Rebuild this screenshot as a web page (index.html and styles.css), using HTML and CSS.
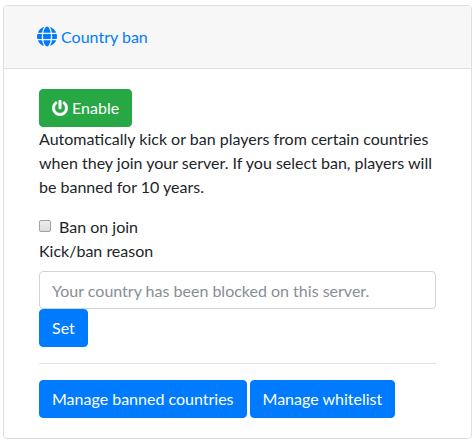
FILE: index.html
```html
<!DOCTYPE html>
<html lang="en">
<head>
<meta charset="utf-8">
<meta name="viewport" content="width=device-width, initial-scale=1">
<title>Country ban</title>
<link rel="stylesheet" href="styles.css">
</head>
<body>
<section class="card">
  <header class="card-header">
    <button type="button" class="btn btn-link"><svg class="icon icon-globe" viewBox="0 0 496 512" aria-hidden="true"><path d="M336.500 160C322 70.700 287.800 8 248 8s-74 62.700-88.500 152h177zM152 256c0 22.200 1.200 43.500 3.300 64h185.300c2.100-20.500 3.300-41.800 3.300-64s-1.200-43.500-3.300-64H155.300c-2.100 20.500-3.300 41.800-3.300 64zm324.700-96c-28.600-67.900-86.500-120.400-158-141.600 24.400 33.800 41.200 84.700 50 141.600h108zM177.200 18.400C105.800 39.600 47.800 92.100 19.300 160h108c8.700-56.900 25.500-107.800 49.900-141.600zM487.400 192H372.700c2.100 21 3.300 42.500 3.300 64s-1.200 43-3.300 64h114.600c5.500-20.500 8.600-41.800 8.600-64s-3.100-43.500-8.500-64zM120 256c0-21.500 1.200-43 3.300-64H8.600C3.200 212.500 0 233.800 0 256s3.200 43.500 8.600 64h114.600c-2-21-3.200-42.500-3.200-64zm39.500 96c14.500 89.300 48.700 152 88.500 152s74-62.700 88.500-152h-177zm159.300 141.600c71.400-21.200 129.400-73.700 158-141.600h-108c-8.800 56.900-25.600 107.800-50 141.600zM19.300 352c28.600 67.900 86.500 120.400 158 141.600-24.400-33.800-41.200-84.700-50-141.600h-108z"/></svg> Country ban</button>
  </header>
  <div class="card-body">
    <button type="button" class="btn btn-success"><svg class="icon icon-power" viewBox="0 0 512 512" aria-hidden="true"><path d="M400 54.100c63 45 104 118.600 104 201.900 0 136.800-110.800 247.700-247.500 248C120 504.300 8.200 393 8 256.400 7.900 173.100 48.900 99.300 111.800 54.200c11.700-8.300 28-4.800 35 7.700L162.600 90c5.900 10.500 3.100 23.800-6.600 31-41.500 30.800-68 79.600-68 134.900-.1 92.300 74.500 168.100 168 168.100 91.600 0 168.600-74.200 168-169.100-.3-51.800-24.700-101.800-68.100-134-9.700-7.200-12.400-20.500-6.500-30.900l15.800-28.100c7-12.400 23.200-16.100 34.800-7.800zM296 264V24c0-13.300-10.700-24-24-24h-32c-13.300 0-24 10.700-24 24v240c0 13.300 10.700 24 24 24h32c13.300 0 24-10.700 24-24z"/></svg> Enable</button>
    <p class="description">Automatically kick or ban players from certain countries when they join your server. If you select ban, players will be banned for 10 years.</p>
    <form>
      <div class="check-row">
        <input type="checkbox" class="check" id="ban-on-join">
        <label for="ban-on-join">Ban on join</label>
      </div>
      <label class="field-label" for="reason">Kick/ban reason</label>
      <input type="text" class="text-field" id="reason" placeholder="Your country has been blocked on this server.">
      <button type="button" class="btn btn-primary">Set</button>
    </form>
    <hr class="divider">
    <div class="actions">
      <button type="button" class="btn btn-primary">Manage banned countries</button>
      <button type="button" class="btn btn-primary">Manage whitelist</button>
    </div>
  </div>
</section>
</body>
</html>
```

FILE: styles.css
```css
*,
*::before,
*::after {
  box-sizing: border-box;
}

body {
  margin: 0;
  padding: 5px 2px 4px 3px;
  background: #fff;
  color: #212529;
  font-family: Lato, "Liberation Sans", sans-serif;
  font-size: 16px;
  line-height: 24px;
}

.card {
  border: 1px solid #dfdfdf;
  border-radius: 4px;
  background: #fff;
  overflow: hidden;
}

.card-header {
  display: flex;
  padding: 12px 20px;
  border-bottom: 1px solid #dfdfdf;
  background: #f7f7f7;
}

.card-body {
  padding: 20px 35px;
}

.btn {
  display: block;
  padding: 6px 12px;
  border: 1px solid transparent;
  border-radius: 4px;
  font: inherit;
  white-space: nowrap;
  cursor: pointer;
}

.btn-link {
  background: transparent;
  color: #007bff;
}

.btn-success {
  border-color: #28a745;
  background: #28a745;
  color: #fff;
}

.btn-primary {
  border-color: #007bff;
  background: #007bff;
  color: #fff;
}

.icon {
  display: inline-block;
  fill: currentColor;
}

.icon-globe {
  width: 20px;
  height: 21px;
  margin: -4px 0;
  vertical-align: 0;
}

.icon-power {
  width: 16px;
  height: 16px;
  vertical-align: -2px;
  stroke: currentColor;
  stroke-width: 16;
}

.description {
  margin: 0 0 16px;
}

.check-row {
  display: flex;
  align-items: center;
  gap: 8px;
}

.check {
  appearance: none;
  width: 12px;
  height: 12px;
  margin: 0 0 2px;
  border: 1px solid #a0a0a0;
  border-radius: 2px;
  background: linear-gradient(#eee, #dcdcdc);
}

.check:checked {
  background: #007bff;
}

.field-label {
  display: block;
  margin-bottom: 8px;
}

.text-field {
  display: block;
  width: 100%;
  height: 38px;
  padding: 6px 12px;
  border: 1px solid #ced4da;
  border-radius: 4px;
  background: #fff;
  color: #495057;
  font: inherit;
}

.text-field::placeholder {
  color: #868e96;
  opacity: 1;
}

.divider {
  margin: 16px 0;
  border: 0;
  border-top: 1px solid #e2e2e2;
}

.actions {
  display: flex;
  flex-wrap: wrap;
  gap: 3px;
}
```
